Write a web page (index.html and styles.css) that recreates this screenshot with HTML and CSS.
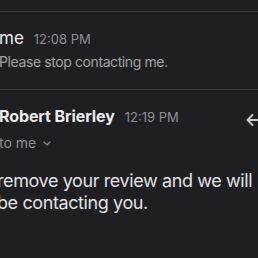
FILE: index.html
```html
<!DOCTYPE html>
<html>
<head>
<meta charset="utf-8">
<link rel="stylesheet" href="styles.css">
</head>
<body>
<div class="page">
  <div class="divider top"></div>
  <section class="msg first">
    <div class="head">
      <span class="sender">me</span>
      <span class="time">12:08 PM</span>
    </div>
    <div class="snippet">Please stop contacting me.</div>
  </section>
  <div class="divider"></div>
  <section class="msg second">
    <div class="head">
      <span class="sender bold">Robert Brierley</span>
      <span class="time">12:19 PM</span>
      <span class="spacer"></span>
      <svg class="reply" width="18" height="14" viewBox="0 0 18 14"><path d="M18 7H1.5M6.5 2L1.5 7L6.5 12" fill="none" stroke="#c9c9cc" stroke-width="1.9" stroke-linecap="round" stroke-linejoin="round"/></svg>
    </div>
    <div class="to">to me <svg class="chev" width="8" height="5" viewBox="0 0 8 5"><path d="M1 1L4 3.8L7 1" fill="none" stroke="#8a8a8f" stroke-width="1.2" stroke-linecap="round" stroke-linejoin="round"/></svg></div>
    <p class="body-text">remove your review and we will<br>be contacting you.</p>
  </section>
</div>
</body>
</html>
```
FILE: styles.css
```css
html, body {
  margin: 0;
  padding: 0;
  background: #1f1f23;
  overflow: hidden;
}
.page {
  width: 272px;
  margin-left: -1px;
  font-family: Inter, "Noto Sans", sans-serif;
  color: #e6e6e8;
}
.divider {
  height: 1px;
  background: #3a3a3f;
}
.divider.top {
  margin-top: 11px;
}
.msg.first {
  padding: 16px 0 18px;
}
.head {
  display: flex;
  align-items: baseline;
  gap: 10px;
}
.sender {
  font-size: 17px;
  line-height: 20px;
  color: #ececee;
}
.sender.bold {
  font-weight: 700;
  font-size: 16px;
  letter-spacing: -0.1px;
}
.time {
  font-size: 13px;
  color: #8e8e93;
}
.spacer {
  flex: 1;
}
.reply {
  align-self: flex-start;
  margin-top: 7px;
  position: relative;
  left: -7px;
}
.snippet {
  margin-top: 5px;
  font-size: 14px;
  line-height: 18px;
  letter-spacing: -0.4px;
  color: #a2a2a7;
}
.msg.second {
  padding-top: 16px;
}
.to {
  margin-top: 7px;
  font-size: 14px;
  line-height: 18px;
  color: #8e8e93;
  display: flex;
  align-items: center;
  gap: 7px;
}
.body-text {
  margin: 18px 0 0 -2px;
  font-size: 18px;
  line-height: 22px;
  letter-spacing: -0.4px;
  color: #e2e2e4;
}
```
